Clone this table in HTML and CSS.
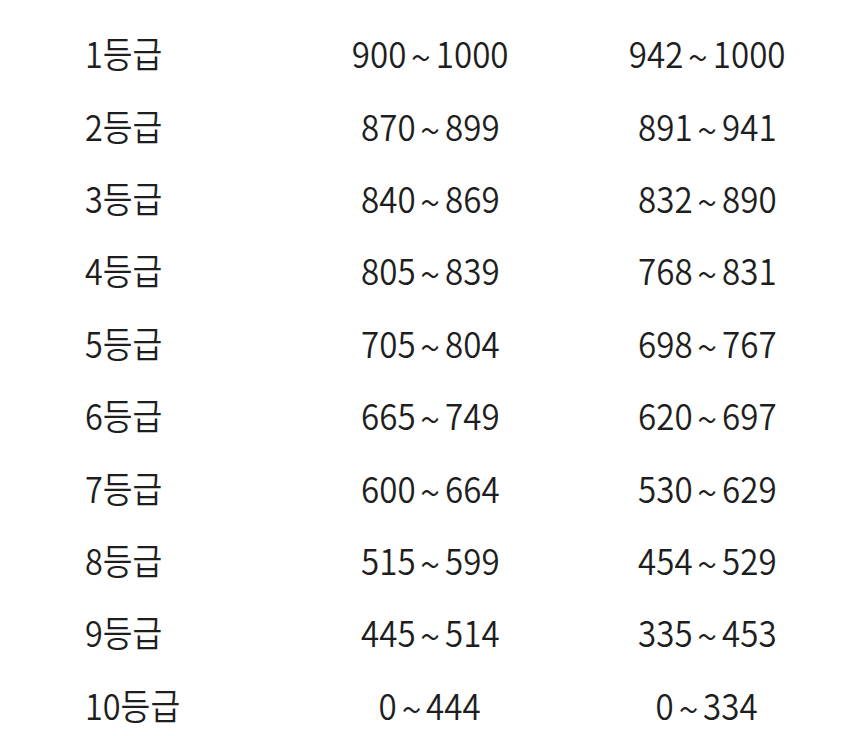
FILE: index.html
```html
<!DOCTYPE html>
<html lang="ko">
<head>
<meta charset="utf-8">
<link rel="stylesheet" href="styles.css">
</head>
<body>
<div class="table">
  <div class="row"><div class="c1"><span>1등급</span></div><div class="c2"><span>900<i class="t">~</i>1000</span></div><div class="c3"><span>942<i class="t">~</i>1000</span></div></div>
  <div class="row"><div class="c1"><span>2등급</span></div><div class="c2"><span>870<i class="t">~</i>899</span></div><div class="c3"><span>891<i class="t">~</i>941</span></div></div>
  <div class="row"><div class="c1"><span>3등급</span></div><div class="c2"><span>840<i class="t">~</i>869</span></div><div class="c3"><span>832<i class="t">~</i>890</span></div></div>
  <div class="row"><div class="c1"><span>4등급</span></div><div class="c2"><span>805<i class="t">~</i>839</span></div><div class="c3"><span>768<i class="t">~</i>831</span></div></div>
  <div class="row"><div class="c1"><span>5등급</span></div><div class="c2"><span>705<i class="t">~</i>804</span></div><div class="c3"><span>698<i class="t">~</i>767</span></div></div>
  <div class="row"><div class="c1"><span>6등급</span></div><div class="c2"><span>665<i class="t">~</i>749</span></div><div class="c3"><span>620<i class="t">~</i>697</span></div></div>
  <div class="row"><div class="c1"><span>7등급</span></div><div class="c2"><span>600<i class="t">~</i>664</span></div><div class="c3"><span>530<i class="t">~</i>629</span></div></div>
  <div class="row"><div class="c1"><span>8등급</span></div><div class="c2"><span>515<i class="t">~</i>599</span></div><div class="c3"><span>454<i class="t">~</i>529</span></div></div>
  <div class="row"><div class="c1"><span>9등급</span></div><div class="c2"><span>445<i class="t">~</i>514</span></div><div class="c3"><span>335<i class="t">~</i>453</span></div></div>
  <div class="row"><div class="c1"><span>10등급</span></div><div class="c2"><span>0<i class="t">~</i>444</span></div><div class="c3"><span>0<i class="t">~</i>334</span></div></div>
</div>
</body>
</html>
```
FILE: styles.css
```css
html, body {
  margin: 0;
  padding: 0;
  background: #ffffff;
}
body {
  width: 866px;
  height: 736px;
  overflow: hidden;
  font-family: "Noto Sans CJK KR", "Noto Sans", sans-serif;
  font-weight: 350;
  color: #1e1e1e;
  font-size: 36px;
}
.table {
  padding-top: 16px;
  display: flex;
  flex-direction: column;
}
.row {
  display: grid;
  grid-template-columns: 85px 345px 0px 277px;
  height: 72.4px;
  align-items: center;
}
.c1 {
  grid-column: 2;
  grid-row: 1;
  justify-self: start;
  white-space: nowrap;
}
.c1 span {
  display: inline-block;
  transform: scaleX(0.9);
  transform-origin: left center;
  line-height: 1;
}
.c2, .c3 {
  grid-row: 1;
  width: 0;
  display: flex;
  justify-content: center;
  white-space: nowrap;
}
.c2 {
  grid-column: 3;
}
.c3 {
  grid-column: 4;
  justify-self: end;
}
.c2 span, .c3 span {
  display: inline-block;
  transform: scaleX(0.92);
  transform-origin: center center;
  line-height: 1;
}
.t {
  display: inline-block;
  font-style: normal;
  font-size: 30px;
  width: 32px;
  text-align: center;
  transform: scale(1.3, 1.15);
  position: relative;
  top: 1px;
}
```
